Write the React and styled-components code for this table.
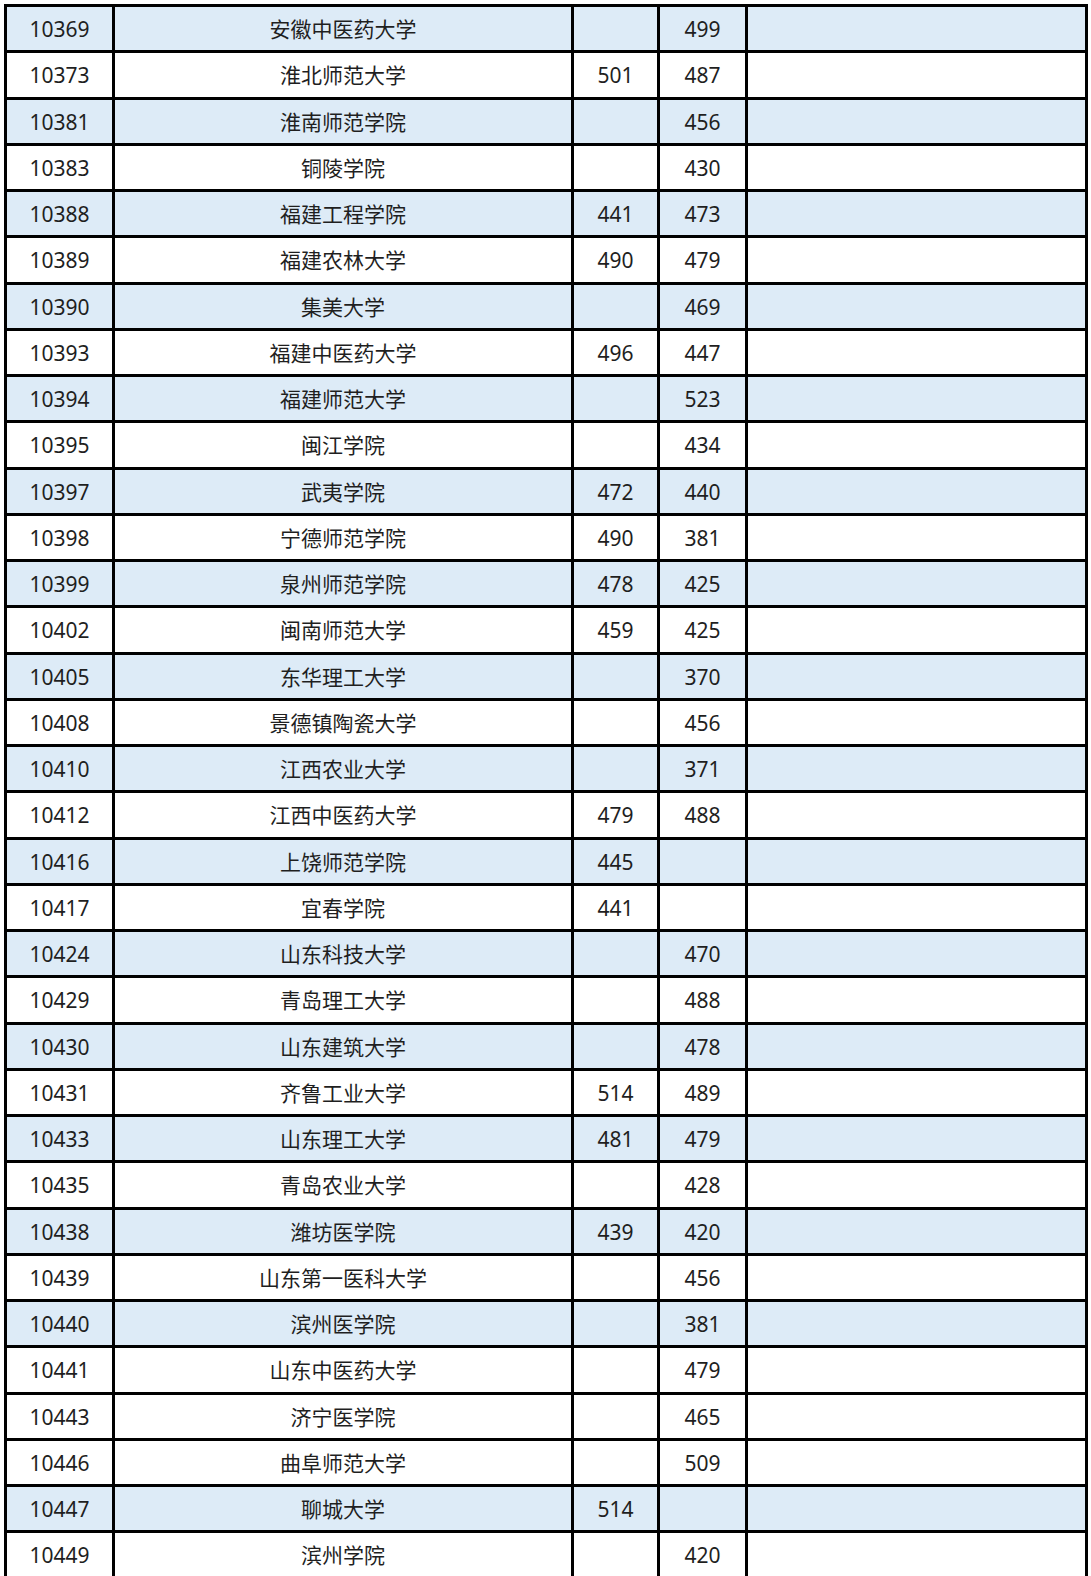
import React from 'react'
import styled, { createGlobalStyle } from 'styled-components'

const rows = [
  ['10369', '安徽中医药大学', '', '499', true],
  ['10373', '淮北师范大学', '501', '487', false],
  ['10381', '淮南师范学院', '', '456', true],
  ['10383', '铜陵学院', '', '430', false],
  ['10388', '福建工程学院', '441', '473', true],
  ['10389', '福建农林大学', '490', '479', false],
  ['10390', '集美大学', '', '469', true],
  ['10393', '福建中医药大学', '496', '447', false],
  ['10394', '福建师范大学', '', '523', true],
  ['10395', '闽江学院', '', '434', false],
  ['10397', '武夷学院', '472', '440', true],
  ['10398', '宁德师范学院', '490', '381', false],
  ['10399', '泉州师范学院', '478', '425', true],
  ['10402', '闽南师范大学', '459', '425', false],
  ['10405', '东华理工大学', '', '370', true],
  ['10408', '景德镇陶瓷大学', '', '456', false],
  ['10410', '江西农业大学', '', '371', true],
  ['10412', '江西中医药大学', '479', '488', false],
  ['10416', '上饶师范学院', '445', '', true],
  ['10417', '宜春学院', '441', '', false],
  ['10424', '山东科技大学', '', '470', true],
  ['10429', '青岛理工大学', '', '488', false],
  ['10430', '山东建筑大学', '', '478', true],
  ['10431', '齐鲁工业大学', '514', '489', false],
  ['10433', '山东理工大学', '481', '479', true],
  ['10435', '青岛农业大学', '', '428', false],
  ['10438', '潍坊医学院', '439', '420', true],
  ['10439', '山东第一医科大学', '', '456', false],
  ['10440', '滨州医学院', '', '381', true],
  ['10441', '山东中医药大学', '', '479', false],
  ['10443', '济宁医学院', '', '465', false],
  ['10446', '曲阜师范大学', '', '509', false],
  ['10447', '聊城大学', '514', '', true],
  ['10449', '滨州学院', '', '420', false],
]

const GlobalStyle = createGlobalStyle`
  body {
    margin: 0;
    padding: 4px;
    background: #fff;
    font-family: "Noto Sans", "Noto Sans CJK SC", sans-serif;
  }
`

const Table = styled.table`
  border-collapse: collapse;
  table-layout: fixed;
  width: 1084px;
  color: #1f1f1f;
  font-size: 21px;

  col:nth-child(1) { width: 108px; }
  col:nth-child(2) { width: 459px; }
  col:nth-child(3) { width: 86px; }
  col:nth-child(4) { width: 88px; }
  col:nth-child(5) { width: 340px; }
`

const Row = styled.tr`
  height: 46.25px;
  background: ${(p) => (p.$shaded ? '#ddebf7' : '#fff')};
`

const Cell = styled.td`
  box-sizing: border-box;
  height: 46.25px;
  border: 3px solid #000;
  padding: 2px 0 0;
  text-align: center;
  vertical-align: middle;
  line-height: 1;
`

export default function App() {
  return (
    <>
      <GlobalStyle />
      <Table>
        <colgroup>
          <col />
          <col />
          <col />
          <col />
          <col />
        </colgroup>
        <tbody>
          {rows.map(([code, name, a, b, shaded]) => (
            <Row key={code} $shaded={shaded}>
              <Cell>{code}</Cell>
              <Cell>{name}</Cell>
              <Cell>{a}</Cell>
              <Cell>{b}</Cell>
              <Cell />
            </Row>
          ))}
        </tbody>
      </Table>
    </>
  )
}
